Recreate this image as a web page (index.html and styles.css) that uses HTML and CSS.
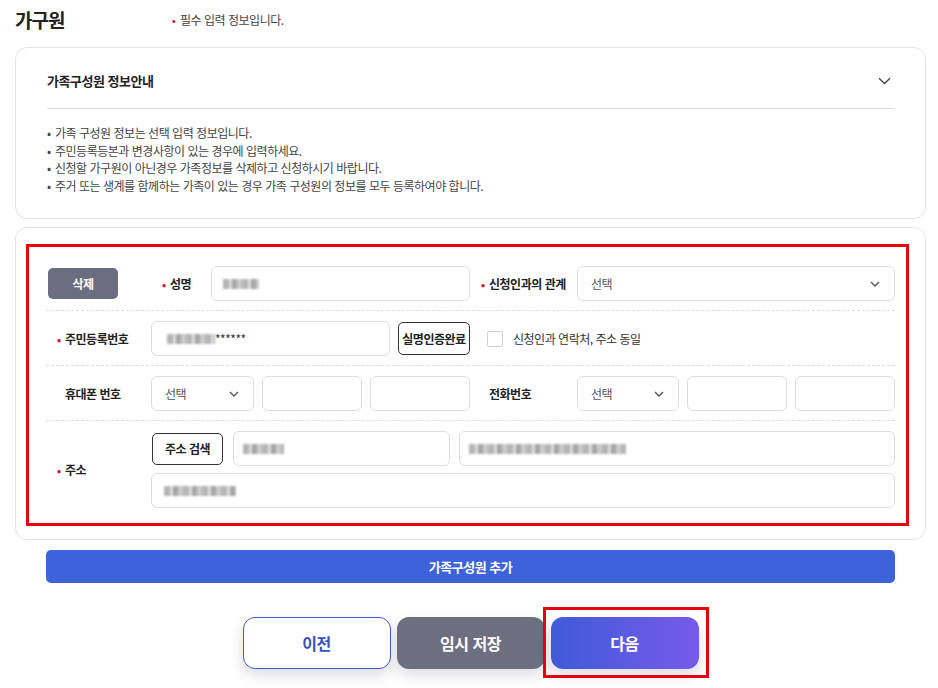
FILE: index.html
```html
<!DOCTYPE html>
<html lang="ko">
<head>
	<meta charset="utf-8">
	<title>가구원</title>
	<link rel="stylesheet" href="styles.css">
</head>
<body>
<div class="page">
	<div class="pageHead">
		<h2 class="pageTitle">가구원</h2>
		<p class="reqNote"><span class="dot">•</span>필수 입력 정보입니다.</p>
	</div>

	<!-- 안내 -->
	<div class="box infoBox">
		<div class="infoHead">
			<strong>가족구성원 정보안내</strong>
			<svg class="chev" width="13" height="8" viewBox="0 0 13 8"><path d="M1 1.2l5.5 5.3 5.5-5.3" fill="none" stroke="#444" stroke-width="1.3"/></svg>
		</div>
		<ul class="infoList">
			<li>가족 구성원 정보는 선택 입력 정보입니다.</li>
			<li>주민등록등본과 변경사항이 있는 경우에 입력하세요.</li>
			<li>신청할 가구원이 아닌경우 가족정보를 삭제하고 신청하시기 바랍니다.</li>
			<li>주거 또는 생계를 함께하는 가족이 있는 경우 가족 구성원의 정보를 모두 등록하여야 합니다.</li>
		</ul>
	</div>

	<!-- 가구원 입력 -->
	<div class="box memberBox">
		<div class="row">
			<div><button class="btnDel">삭제</button></div>
			<div class="nameCell">
				<span class="lbl lblName"><span class="dot">•</span>성명</span>
				<div class="inp"><span class="blur bName"></span></div>
			</div>
			<span class="lbl"><span class="dot">•</span>신청인과의 관계</span>
			<div class="inp sel">선택 <svg width="10" height="6" viewBox="0 0 10 6"><path d="M1 1l4 4 4-4" fill="none" stroke="#555" stroke-width="1.4"/></svg></div>
		</div>

		<div class="row">
			<span class="lbl"><span class="dot">•</span>주민등록번호</span>
			<div class="flexCell">
				<div class="inp grow"><span class="blur bId"></span>******</div>
				<button class="btnLine btnAuth">실명인증완료</button>
			</div>
			<div class="sameCell">
				<span class="chk"></span>
				<span class="chkText">신청인과 연락처, 주소 동일</span>
			</div>
		</div>

		<div class="row">
			<span class="lbl"><span class="dot none">•</span>휴대폰 번호</span>
			<div class="flexCell">
				<div class="inp sel telSel">선택 <svg width="10" height="6" viewBox="0 0 10 6"><path d="M1 1l4 4 4-4" fill="none" stroke="#555" stroke-width="1.4"/></svg></div>
				<div class="inp grow"></div>
				<div class="inp grow"></div>
			</div>
			<span class="lbl"><span class="dot none">•</span>전화번호</span>
			<div class="flexCell">
				<div class="inp sel telSel2">선택 <svg width="10" height="6" viewBox="0 0 10 6"><path d="M1 1l4 4 4-4" fill="none" stroke="#555" stroke-width="1.4"/></svg></div>
				<div class="inp grow"></div>
				<div class="inp grow"></div>
			</div>
		</div>

		<div class="row lastRow">
			<span class="lbl"><span class="dot">•</span>주소</span>
			<div class="addrCell">
				<div class="addrLine">
					<button class="btnLine btnZip">주소 검색</button>
					<div class="inp zipInp"><span class="blur bZip"></span></div>
					<div class="inp grow"><span class="blur bAddr"></span></div>
				</div>
				<div class="inp"><span class="blur bDetail"></span></div>
			</div>
		</div>

		<div class="markBox"></div>
	</div>

	<button class="btnAdd">가족구성원 추가</button>

	<div class="btnArea">
		<button class="btnBig btnPrev">이전</button>
		<button class="btnBig btnTemp">임시 저장</button>
		<div class="markWrap">
			<button class="btnBig btnNext">다음</button>
			<span class="markNext"></span>
		</div>
	</div>
</div>
</body>
</html>
```

FILE: styles.css
```css
body { margin: 0; background: #fff; color: #222; font-family: "Noto Sans CJK KR", "Noto Sans", sans-serif; letter-spacing: -0.03em; }
button { font-family: inherit; letter-spacing: inherit; cursor: pointer; }
.page { width: 911px; padding: 0 0 19px 15px; }

/* head */
.pageHead { display: flex; align-items: center; height: 40px; margin-bottom: 7px; }
.pageTitle { margin: 0; width: 157px; font-size: 19px; line-height: 24px; font-weight: 700; color: #222; letter-spacing: -0.05em; }
.reqNote { margin: 0; font-size: 12px; line-height: 16px; color: #444; }
.dot { display: inline-block; width: 8px; color: #d0112b; font-size: 11px; }
.dot.none { visibility: hidden; }

.box { background: #fff; border: 1px solid #e3e3e3; border-radius: 12px; }

/* info */
.infoHead {
	display: flex;
	justify-content: space-between;
	align-items: center;
	margin: 0 31px;
	padding: 23px 0 17px;
	border-bottom: 1px solid #dcdcdc;
	font-size: 13px;
	line-height: 20px;
}
.infoHead .chev { margin-right: 3px; }
.infoList { margin: 0; padding: 15px 31px 24px; list-style: none; font-size: 12px; line-height: 17.5px; color: #444; }
.infoList li:before { content: "•"; display: inline-block; width: 8px; }

/* member */
.memberBox { position: relative; margin-top: 8px; padding: 28px 30px 22px; }
.row {
	display: grid;
	grid-template-columns: 105px 319px 107px 318px;
	align-items: center;
	padding: 10px 0 9px;
	border-bottom: 1px dashed #dcdcdc;
}
.row.lastRow { border-bottom: none; }
.lbl { padding-left: 11px; font-size: 12px; line-height: 16px; font-weight: 700; color: #222; }

.inp {
	display: flex;
	align-items: center;
	box-sizing: border-box;
	height: 35px;
	padding: 0 12px;
	border: 1px solid #dedede;
	border-radius: 6px;
	background: #fff;
	font-size: 12px;
	color: #333;
}
.sel { justify-content: space-between; padding: 0 14px 0 13px; color: #555; }
.grow { flex: 1; }

.btnDel { width: 70px; height: 31px; margin-left: 2px; border: none; border-radius: 5px; background: #6b6e80; color: #fff; font-size: 12px; font-weight: 700; }
.nameCell { display: flex; align-items: center; }
.lblName { width: 60px; box-sizing: border-box; }
.nameCell .inp { flex: 1; }

.flexCell { display: flex; align-items: center; gap: 8px; }
.btnLine { box-sizing: border-box; height: 33px; padding: 0; border: 1px solid #333; border-radius: 5px; background: #fff; color: #222; font-size: 12px; font-weight: 700; }
.btnAuth { width: 72px; }

.sameCell { grid-column: 3 / 5; display: flex; align-items: center; }
.chk { width: 16px; height: 16px; margin-left: 17px; box-sizing: border-box; border: 1px solid #cfcfcf; border-radius: 2px; }
.chkText { margin-left: 10px; font-size: 12px; color: #333; }

.telSel { width: 103px; flex: none; }
.telSel2 { width: 102px; flex: none; }

.addrCell { grid-column: 2 / 5; display: flex; flex-direction: column; gap: 7px; }
.addrLine { display: flex; align-items: center; }
.btnZip { width: 71px; height: 32px; margin: 0 10px 0 1px; }
.zipInp { width: 217px; margin-right: 9px; }

.blur { display: inline-block; height: 10px; filter: blur(1.2px); background: repeating-linear-gradient(90deg, #b5b5b5 0 6px, #dcdcdc 6px 9px, #a6a6a6 9px 14px, #cacaca 14px 19px); }
.bName { width: 36px; margin-left: -1px; }
.bId { width: 48px; margin-left: 3px; }
.bZip { width: 41px; margin-left: -3px; }
.bAddr { width: 157px; margin-left: -3px; }
.bDetail { width: 72px; }

.markBox { position: absolute; top: 16px; left: 10px; right: 16px; bottom: 13px; border: 3px solid #e50012; pointer-events: none; }

/* buttons */
.btnAdd { display: block; width: 849px; height: 33px; margin: 10px 0 0 31px; border: none; border-radius: 5px; background: #3e62d9; color: #fff; font-size: 13px; font-weight: 700; }

.btnArea { display: flex; justify-content: center; gap: 6px; margin-top: 34px; }
.btnBig { display: block; width: 148px; height: 52px; border-radius: 12px; font-size: 16px; font-weight: 700; box-shadow: 0 6px 14px rgba(40, 40, 80, 0.16); }
.btnPrev { border: 1px solid #3e5ccf; background: #fff; color: #3a51c4; }
.btnTemp { border: none; background: #6d6f80; color: #fff; }
.btnNext { border: none; background: linear-gradient(90deg, #3f5bd8, #775ae9); color: #fff; }
.markWrap { position: relative; display: flex; }
.markNext { position: absolute; top: -10px; left: -8px; right: -10px; bottom: -9px; border: 3px solid #e50012; }
```
